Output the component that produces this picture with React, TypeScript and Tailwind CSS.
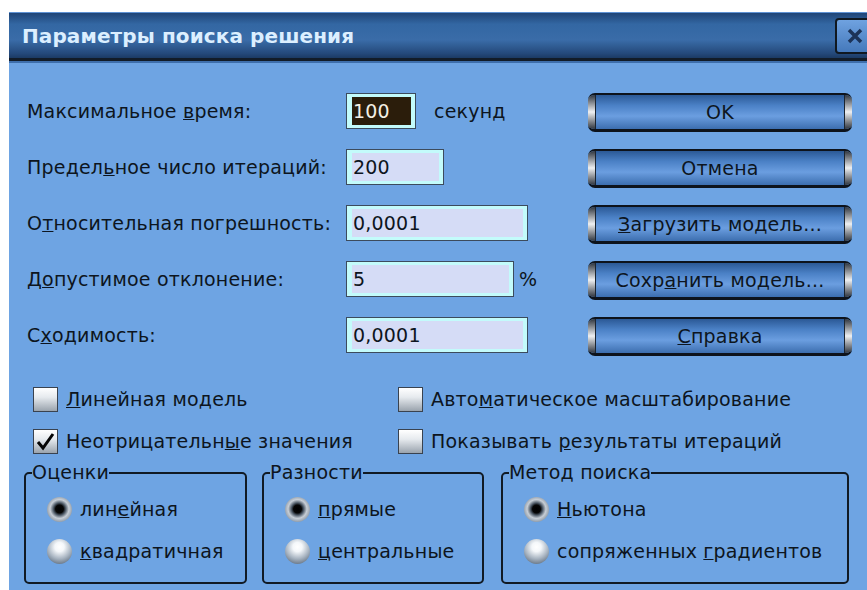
import type { ReactNode } from "react";

// Shared text style for the dialog body
const body = "font-['DejaVu_Sans',sans-serif] text-[19px] tracking-[0.2px] text-[#0d1520]";

function Field({
  label,
  value,
  width,
  selected,
  suffix,
  suffixGap,
}: {
  label: ReactNode;
  value: string;
  width: string;
  selected?: boolean;
  suffix?: string;
  suffixGap?: string;
}) {
  return (
    <div className="flex h-[36px] items-center">
      <div className="w-[319px] whitespace-nowrap">{label}</div>
      <div className={`${width} h-[36px] border border-[#3c4b5d] bg-[#c3fbfb] py-[3px] pl-[5px] pr-[4px]`}>
        <div
          className={
            selected
              ? "flex h-full items-center bg-[#2b1d0b] pl-[1px] text-[#f3efe4]"
              : "flex h-full items-center bg-[#d5dcf6] pl-[1px]"
          }
        >
          {value}
        </div>
      </div>
      {suffix && <span className={suffixGap}>{suffix}</span>}
    </div>
  );
}

function Button({ children }: { children: ReactNode }) {
  return (
    <div className="flex h-[39px] w-[264px] overflow-hidden rounded-[7px] border-t-2 border-b-[3px] border-[#0d131c]">
      <div className="w-[7px] bg-[linear-gradient(to_bottom,#30363f,#eef0f2_50%,#30363f)]" />
      <div className="flex flex-1 items-center justify-center border-x border-[#1a2430] bg-[linear-gradient(to_bottom,#2b5996_0%,#4a80c5_30%,#6b9ee0_62%,#3c6eaf_100%)]">
        {children}
      </div>
      <div className="w-[7px] bg-[linear-gradient(to_bottom,#30363f,#eef0f2_50%,#30363f)]" />
    </div>
  );
}

function Check({ checked, children }: { checked?: boolean; children: ReactNode }) {
  return (
    <div className="flex h-[25px] items-center gap-[8px] whitespace-nowrap">
      <div className="flex h-[25px] w-[25px] items-center justify-center border border-[#39424f] bg-[linear-gradient(to_bottom,#ffffff,#e6eaee_40%,#9aa3ad)]">
        {checked && (
          <svg width="21" height="21" viewBox="0 0 21 21">
            <path d="M3 11 L8 17 L18 3" fill="none" stroke="#050505" strokeWidth="3" />
          </svg>
        )}
      </div>
      <span>{children}</span>
    </div>
  );
}

function Radio({ checked, children }: { checked?: boolean; children: ReactNode }) {
  return (
    <div className="flex h-[25px] items-center gap-[8px] whitespace-nowrap">
      <div
        className={
          checked
            ? "h-[25px] w-[25px] rounded-full bg-[radial-gradient(circle_at_50%_48%,#000000_0%,#050505_22%,#4d5966_34%,#c7ced6_52%,#8996a4_75%,#4c5866_100%)]"
            : "h-[25px] w-[25px] rounded-full bg-[radial-gradient(circle_at_50%_32%,#ffffff_0%,#f4f7fa_22%,#a9b5c2_55%,#6f7d8d_80%,#4b5867_100%)]"
        }
      />
      <span>{children}</span>
    </div>
  );
}

function Group({ title, width, children }: { title: string; width: string; children: ReactNode }) {
  return (
    <fieldset className={`${width} h-[122px] rounded-[5px] border-2 border-[#111a24]`}>
      <legend className="ml-[6px] leading-[21px]">{title}</legend>
      <div className="flex flex-col gap-[17px] pt-[14px] pl-[21px]">{children}</div>
    </fieldset>
  );
}

export default function App() {
  return (
    <div className="h-[590px] w-[867px] overflow-hidden bg-white pt-[12px] pl-[9px]">
      <div className="flex h-full flex-col overflow-hidden">
        {/* title bar */}
        <div className="flex h-[46px] items-center justify-between border-t border-[#5e92d4] bg-[linear-gradient(to_bottom,#1f4577_0%,#3367a3_25%,#3a6ca8_60%,#24497a_90%,#1b3a63_100%)] pl-[13px]">
          <span className="font-['DejaVu_Sans',sans-serif] text-[20px] font-bold tracking-[0.1px] text-[#dcefff]">
            Параметры поиска решения
          </span>
          <div className="mr-[-8px] flex h-[36px] w-[40px] items-center justify-center rounded-[4px] border-2 border-[#101820] bg-[linear-gradient(to_bottom,#6fa2e0,#4579bb)]">
            <svg width="16" height="16" viewBox="0 0 16 16">
              <path d="M2 2 L14 14 M14 2 L2 14" stroke="#1c3358" strokeWidth="3.5" />
            </svg>
          </div>
        </div>
        <div className="h-[3px] bg-[#121c28]" />
        <div className="h-[2px] bg-[#3f6fac]" />

        {/* dialog body */}
        <div className={`${body} flex-1 bg-[#6ea4e3]`}>
          <div className="flex pt-[30px] pl-[18px]">
            <div className="flex w-[561px] flex-col gap-[20px]">
              <Field
                label={<>Максимальное <u>в</u>ремя:</>}
                value="100"
                width="w-[70px]"
                selected
                suffix="секунд"
                suffixGap="ml-[18px]"
              />
              <Field label={<>Предел<u>ь</u>ное число итераций:</>} value="200" width="w-[98px]" />
              <Field label={<>О<u>т</u>носительная погрешность:</>} value="0,0001" width="w-[182px]" />
              <Field
                label={<>Д<u>о</u>пустимое отклонение:</>}
                value="5"
                width="w-[168px]"
                suffix="%"
                suffixGap="ml-[5px]"
              />
              <Field label={<>С<u>х</u>одимость:</>} value="0,0001" width="w-[182px]" />
            </div>
            <div className="flex flex-col gap-[17px]">
              <Button>OK</Button>
              <Button>Отмена</Button>
              <Button>
                <span><u>З</u>агрузить модель...</span>
              </Button>
              <Button>
                <span>Сохр<u>а</u>нить модель...</span>
              </Button>
              <Button>
                <span><u>С</u>правка</span>
              </Button>
            </div>
          </div>

          {/* options */}
          <div className="mt-[31px] grid w-[780px] grid-cols-[365px_1fr] gap-y-[17px] pl-[24px]">
            <Check>
              <u>Л</u>инейная модель
            </Check>
            <Check>
              Авто<u>м</u>атическое масштабирование
            </Check>
            <Check checked>
              Неотрицательн<u>ы</u>е значения
            </Check>
            <Check>
              Показывать <u>р</u>езультаты итераций
            </Check>
          </div>

          <div className="mt-[8px] flex pl-[15px]">
            <Group title="Оценки" width="w-[223px]">
              <Radio checked>
                лин<u>е</u>йная
              </Radio>
              <Radio>
                <u>к</u>вадратичная
              </Radio>
            </Group>
            <div className="w-[15px]" />
            <Group title="Разности" width="w-[222px]">
              <Radio checked>
                <u>п</u>рямые
              </Radio>
              <Radio>
                <u>ц</u>ентральные
              </Radio>
            </Group>
            <div className="w-[17px]" />
            <Group title="Метод поиска" width="w-[348px]">
              <Radio checked>
                <u>Н</u>ьютона
              </Radio>
              <Radio>
                сопряженных <u>г</u>радиентов
              </Radio>
            </Group>
          </div>
        </div>
      </div>
    </div>
  );
}
